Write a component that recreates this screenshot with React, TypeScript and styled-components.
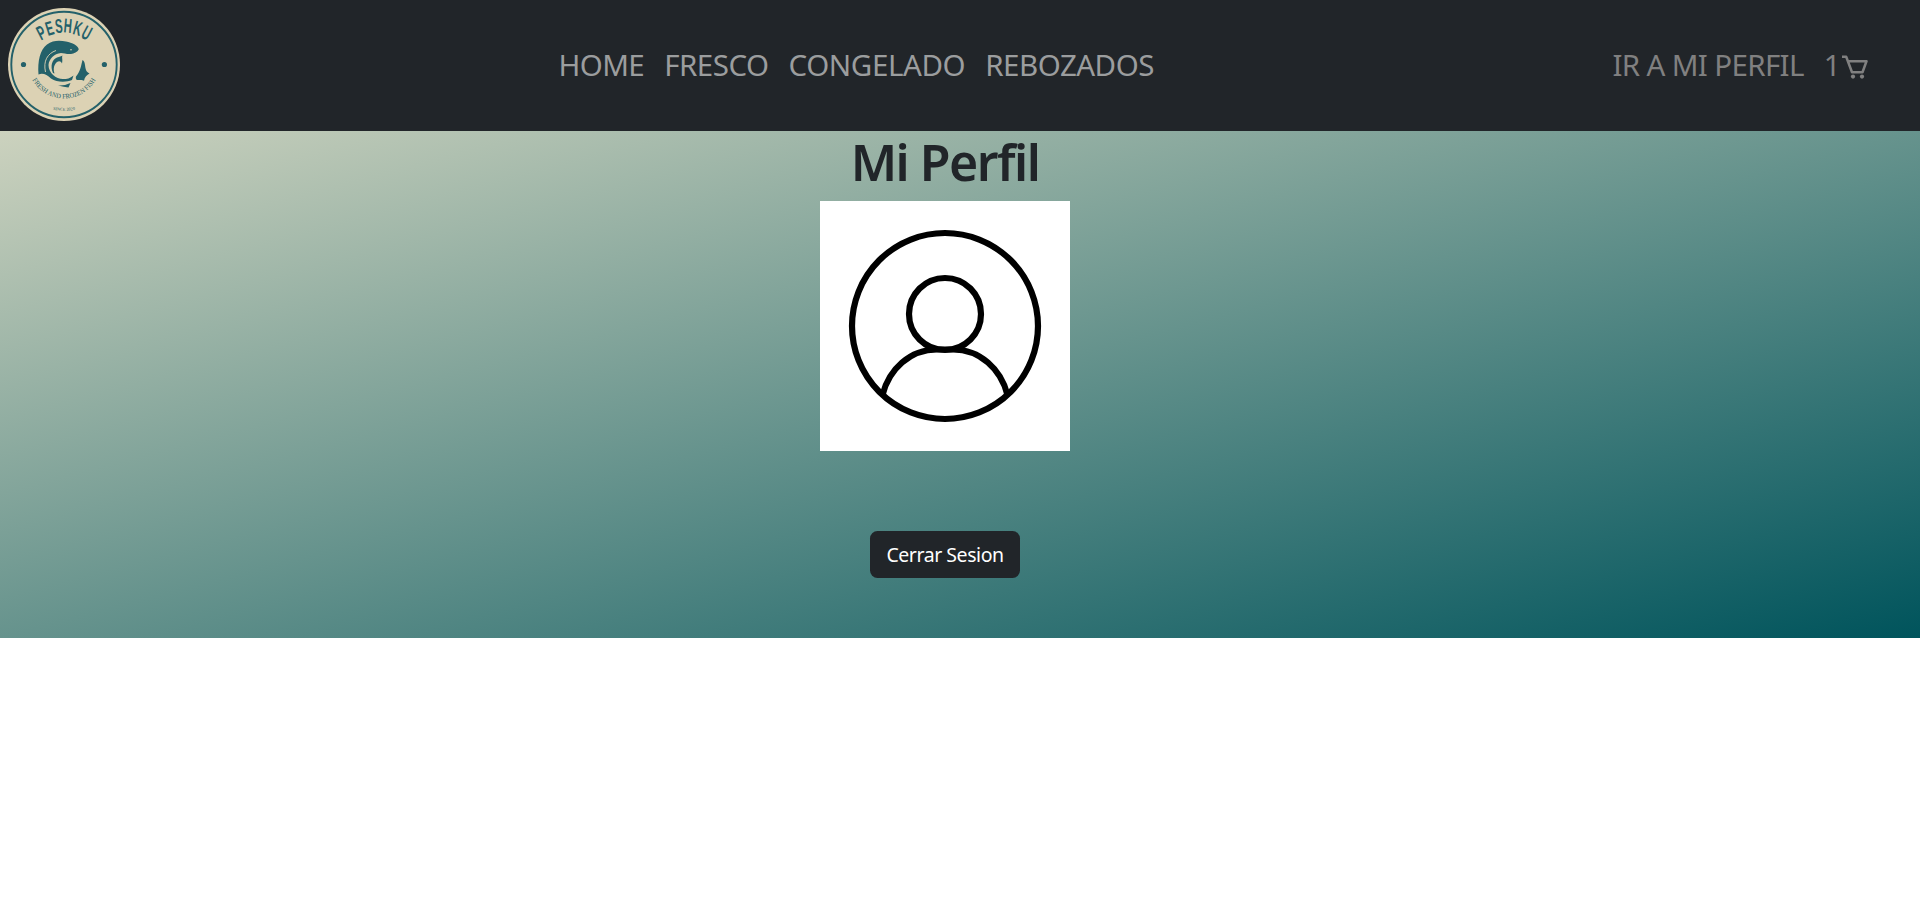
import React from "react";
import styled, { createGlobalStyle } from "styled-components";

const GlobalStyle = createGlobalStyle`
  *, *::before, *::after { box-sizing: border-box; }
  body {
    margin: 0;
    background: #fff;
    color: #212529;
    font-family: "Segoe UI", "Noto Sans", "Open Sans", sans-serif;
    font-size: 20px;
    line-height: 1.5;
  }
`;

const Header = styled.header`
  display: grid;
  grid-template-columns: 550.5px 1fr auto;
  align-items: center;
  height: 131px;
  padding: 0 52px 2px 8px;
  background: #212529;
`;

const Brand = styled.a`
  display: block;
  width: 112px;
  height: 113px;
`;

const NavList = styled.nav`
  display: flex;
  align-items: center;
  gap: 20px;
`;

const NavLink = styled.a<{ $tone?: "main" | "muted"; $spacing?: number }>`
  display: flex;
  align-items: center;
  color: ${({ $tone }) => ($tone === "muted" ? "#808080" : "#9b9d9e")};
  font-size: 29.5px;
  line-height: 45px;
  letter-spacing: ${({ $spacing = -0.6 }) => $spacing}px;
  white-space: nowrap;
  text-decoration: none;
`;

const CartSvg = styled.svg`
  display: block;
  margin: 5px 0 0 2px;
`;

const Profile = styled.main`
  display: flex;
  flex-direction: column;
  align-items: center;
  height: 507px;
  padding-right: 30px;
  background: linear-gradient(to bottom right, #ccd2be, #00545c);
`;

const Title = styled.h1`
  margin: 0 0 9px;
  padding-top: 1px;
  font-size: 50px;
  font-weight: 600;
  line-height: 60px;
  letter-spacing: -1.5px;
`;

const Avatar = styled.svg`
  display: block;
  width: 250px;
  height: 250px;
  background: #fff;
`;

const LogoutButton = styled.button`
  width: 150px;
  height: 47px;
  margin-top: 80px;
  padding: 0;
  border: 0;
  border-radius: 7.5px;
  background: #212529;
  color: #fff;
  font: inherit;
  font-size: 19.5px;
  letter-spacing: -0.45px;
  white-space: nowrap;
`;

const wordmark = [
  { letter: "P", x: 41, y: 32.5, angle: -27 },
  { letter: "E", x: 49.5, y: 28, angle: -17 },
  { letter: "S", x: 58.6, y: 25.6, angle: -6 },
  { letter: "H", x: 68, y: 25.4, angle: 5 },
  { letter: "K", x: 77.8, y: 28, angle: 16 },
  { letter: "U", x: 87, y: 32.5, angle: 28 },
];

function Logo() {
  const teal = "#24616a";
  const cream = "#dcd2b4";
  return (
    <svg width="112" height="113" viewBox="8 8 112 113">
      <defs>
        <path id="mottoArc" d="M28 62.5 A36 36 0 0 0 100 62.5" />
        <path id="yearArc" d="M44 107.5 Q64 114 84 107.5" />
      </defs>
      <ellipse cx="64" cy="64.5" rx="56" ry="56.5" fill={cream} />
      <circle cx="64" cy="64.5" r="52.7" fill="none" stroke={teal} strokeWidth="1.9" />
      <circle cx="23.5" cy="64.5" r="2.6" fill={teal} />
      <circle cx="104.4" cy="64.5" r="2.6" fill={teal} />
      <g fill={teal}>
        <g fontFamily="Liberation Sans, sans-serif" fontWeight="700" fontSize="20" textAnchor="middle">
          {wordmark.map(({ letter, x, y, angle }) => (
            <text key={letter} y="7.2" transform={`translate(${x} ${y}) rotate(${angle}) scale(.56 1)`}>
              {letter}
            </text>
          ))}
        </g>
        <path d="M38.5 74.5 C37.5 61 40 50 47 44.5 C53 40 60 40.5 66 41.5 C72 42.5 79 46 78.7 49.5 C77.5 52 74 53.5 71 54 C67 54.5 64 53 61 53 C54 53.5 49 59 48.5 65 C48.5 73 56 79 63 79 C67 79 70 78.5 73.5 75.5 L72 80 C66 82.5 57 82.5 51 78.5 C47 75 43 72.5 38.5 74.5 Z" />
        <path d="M53 73 C50 66 52 59.5 57 57.5 C59.5 56.5 61.5 56.5 62.5 55.5 C61.5 57.5 63 59.5 62 63.5 C61 61 59 60.5 57 62 C54 64.5 53 68.5 54.5 73.5 Z" />
        <path d="M82.5 60 C81 66 80.5 71 76 76.5 C75.5 78 76 79.5 77 80 C80 80 82.5 79.5 84 80.8 C84.5 77 87 75 89.5 73.5 C86 72 85.5 69 85 65 C84.5 62 84 61 82.5 60 Z" />
        <path d="M58 85.5 Q64 86 70.5 83 L68.5 87.5 Q64 87 58 85.5 Z" />
      </g>
      <path d="M45.5 72 C43 61 47.5 53.5 56 50.5" fill="none" stroke={cream} strokeWidth=".9" />
      <circle cx="71" cy="49.7" r=".8" fill={cream} />
      <g fill={teal} fontFamily="Liberation Serif, serif" textAnchor="middle">
        <text fontSize="6.8" textLength="77" lengthAdjust="spacingAndGlyphs">
          <textPath href="#mottoArc" startOffset="50%">FRESH AND FROZEN FISH</textPath>
        </text>
        <text fontSize="4.3">
          <textPath href="#yearArc" startOffset="50%">SINCE 2020</textPath>
        </text>
      </g>
    </svg>
  );
}

function CartIcon() {
  return (
    <CartSvg width="26" height="24" viewBox="0 0 26 24" fill="none" stroke="currentColor" strokeWidth="2.5">
      <path d="M0 1.8 H4.2 L10 17.2 H20.5 L24.5 6.2 H6" strokeLinejoin="round" />
      <circle cx="11" cy="21.6" r="2.1" fill="currentColor" stroke="none" />
      <circle cx="20" cy="21.6" r="2.1" fill="currentColor" stroke="none" />
    </CartSvg>
  );
}

function UserPicture() {
  return (
    <Avatar viewBox="0 0 250 250" fill="none" stroke="#000" strokeWidth="6.2">
      <circle cx="125" cy="125" r="93" />
      <circle cx="125" cy="113" r="36" />
      <path d="M62.5 194 C69 168 90 148.5 117 148.5 H133 C160 148.5 181 168 187.5 194" />
    </Avatar>
  );
}

export default function App() {
  return (
    <>
      <GlobalStyle />
      <Header>
        <Brand><Logo /></Brand>
        <NavList>
          <NavLink>HOME</NavLink>
          <NavLink $spacing={-0.5}>FRESCO</NavLink>
          <NavLink $spacing={-0.4}>CONGELADO</NavLink>
          <NavLink $spacing={-0.5}>REBOZADOS</NavLink>
        </NavList>
        <NavList>
          <NavLink $tone="muted" $spacing={-0.65}>IR A MI PERFIL</NavLink>
          <NavLink $tone="muted">1<CartIcon /></NavLink>
        </NavList>
      </Header>
      <Profile>
        <Title>Mi Perfil</Title>
        <UserPicture />
        <LogoutButton>Cerrar Sesion</LogoutButton>
      </Profile>
    </>
  );
}
